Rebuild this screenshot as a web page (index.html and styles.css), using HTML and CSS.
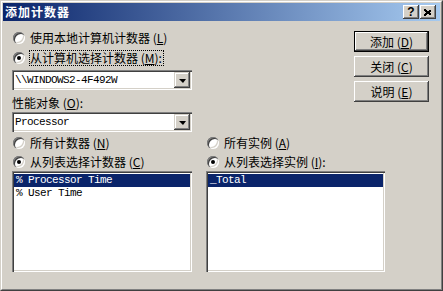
FILE: index.html
```html
<!DOCTYPE html>
<html lang="zh-CN">
<head>
  <meta charset="UTF-8" />
  <title>添加计数器</title>
  <link rel="stylesheet" href="styles.css">
</head>
<body>
  <div class="window">
    <div class="frame">
      <div class="titlebar">
        <span class="title">添加计数器</span>
        <div class="caption-buttons">
          <span class="caption-btn help">?</span>
          <span class="caption-btn close">
            <svg width="8" height="7" viewBox="0 0 8 7"><path d="M0.5 0.5 L7.5 6.5 M1.5 0.5 L7.5 5.5 M0.5 1.5 L6.5 6.5 M7.5 0.5 L0.5 6.5 M6.5 0.5 L0.5 5.5 M7.5 1.5 L1.5 6.5" stroke="#000" stroke-width="1" fill="none" shape-rendering="crispEdges"/></svg>
          </span>
        </div>
      </div>

      <div class="content">
        <div class="top">
          <div class="left">
            <div class="radio-row">
              <span class="radio"></span>
              <span class="radio-label">使用本地计算机计数器 (<u>L</u>)</span>
            </div>
            <div class="radio-row">
              <span class="radio checked"></span>
              <span class="radio-label focus">从计算机选择计数器 (<u>M</u>):</span>
            </div>
            <div class="combo">
              <span class="combo-text">\\WINDOWS2-4F492W</span>
              <span class="drop"></span>
            </div>
            <div class="field-label">性能对象 (<u>O</u>):</div>
            <div class="combo">
              <span class="combo-text">Processor</span>
              <span class="drop"></span>
            </div>
          </div>

          <div class="buttons">
            <button class="btn default">添加 (<u>D</u>)</button>
            <button class="btn">关闭 (<u>C</u>)</button>
            <button class="btn">说明 (<u>E</u>)</button>
          </div>
        </div>

        <div class="bottom">
          <div class="col">
            <div class="radio-row">
              <span class="radio"></span>
              <span class="radio-label">所有计数器 (<u>N</u>)</span>
            </div>
            <div class="radio-row short">
              <span class="radio checked"></span>
              <span class="radio-label">从列表选择计数器 (<u>C</u>)</span>
            </div>
            <div class="listbox">
              <div class="item selected">% Processor Time</div>
              <div class="item">% User Time</div>
            </div>
          </div>
          <div class="col">
            <div class="radio-row">
              <span class="radio"></span>
              <span class="radio-label">所有实例 (<u>A</u>)</span>
            </div>
            <div class="radio-row short">
              <span class="radio checked"></span>
              <span class="radio-label">从列表选择实例 (<u>I</u>):</span>
            </div>
            <div class="listbox">
              <div class="item selected">_Total</div>
            </div>
          </div>
        </div>
      </div>
    </div>
  </div>
</body>
</html>
```

FILE: styles.css
```css
body {
  margin: 0;
  background-color: #d4d0c8;
  font-family: "Noto Sans CJK SC", "Liberation Sans", sans-serif;
  font-size: 12px;
  color: #000;
}
u {
  text-decoration: underline;
}
.window {
  width: 443px;
  height: 291px;
  box-sizing: border-box;
  border: 1px solid;
  border-color: #d4d0c8 #404040 #404040 #d4d0c8;
  overflow: hidden;
}
.frame {
  height: 100%;
  box-sizing: border-box;
  border: 1px solid;
  border-color: #fff #808080 #808080 #fff;
  padding: 1px;
}
.titlebar {
  height: 18px;
  display: flex;
  align-items: center;
  justify-content: space-between;
  background: linear-gradient(to right, #0a246a, #a6caf0);
  padding: 0 2px 0 2px;
}
.title {
  color: #fff;
  font-weight: bold;
  font-size: 12px;
  letter-spacing: 1px;
  line-height: 18px;
}
.caption-buttons {
  display: flex;
  gap: 0;
  margin-right: 2px;
}
.caption-btn {
  width: 16px;
  height: 14px;
  box-sizing: border-box;
  display: flex;
  align-items: center;
  justify-content: center;
  background-color: #d4d0c8;
  box-shadow: inset -1px -1px #404040, inset 1px 1px #fff, inset -2px -2px #808080, inset 2px 2px #d4d0c8;
}
.caption-btn.help {
  font-family: "Liberation Sans", sans-serif;
  font-weight: bold;
  font-size: 12px;
  line-height: 14px;
}
.caption-btn.close {
  margin-left: 1px;
}
.content {
  padding: 7px 11px 0 9px;
}
.top {
  display: flex;
  justify-content: space-between;
}
.left {
  width: 180px;
}
.radio-row {
  height: 20px;
  display: flex;
  align-items: center;
  gap: 5px;
  padding-left: 1px;
}
.radio-row.short {
  height: 18px;
}
.radio {
  width: 12px;
  height: 12px;
  flex: none;
  border-radius: 50%;
  background-color: #fff;
  box-shadow: inset 1px 1px #808080, inset 2px 2px #404040, inset -1px -1px #fff, inset -2px -2px #d4d0c8;
  display: flex;
  align-items: center;
  justify-content: center;
}
.radio.checked::after {
  content: "";
  width: 4px;
  height: 4px;
  border-radius: 50%;
  background-color: #000;
}
.radio-label {
  white-space: nowrap;
  line-height: 14px;
}
.radio-label.focus {
  border: 1px dotted #000;
  margin-left: -1px;
  padding: 0 1px 0 0;
}
.combo {
  height: 20px;
  box-sizing: border-box;
  margin-top: 2px;
  display: flex;
  align-items: center;
  justify-content: space-between;
  background-color: #fff;
  box-shadow: inset 1px 1px #808080, inset 2px 2px #404040, inset -1px -1px #fff, inset -2px -2px #d4d0c8;
  padding: 2px;
}
.field-label + .combo {
  margin-top: 0;
}
.combo-text,
.item {
  font-family: "Liberation Mono", "DejaVu Sans Mono", monospace;
  font-size: 11px;
  letter-spacing: -0.6px;
  white-space: nowrap;
}
.combo-text {
  padding-left: 1px;
}
.drop {
  width: 16px;
  height: 16px;
  box-sizing: border-box;
  background-color: #d4d0c8;
  box-shadow: inset -1px -1px #404040, inset 1px 1px #d4d0c8, inset -2px -2px #808080, inset 2px 2px #fff;
  display: flex;
  align-items: center;
  justify-content: center;
}
.drop::after {
  content: "";
  width: 0;
  height: 0;
  border-left: 4px solid transparent;
  border-right: 3px solid transparent;
  border-top: 4px solid #000;
  margin-top: 1px;
}
.field-label {
  height: 19px;
  line-height: 19px;
  margin-top: 3px;
  white-space: nowrap;
}
.buttons {
  width: 75px;
  margin-top: 3px;
  display: flex;
  flex-direction: column;
  gap: 4px;
}
.btn {
  height: 21px;
  margin: 0;
  padding: 0;
  border: none;
  background-color: #d4d0c8;
  font-family: inherit;
  font-size: 12px;
  color: #000;
  box-shadow: inset -1px -1px #404040, inset 1px 1px #fff, inset -2px -2px #808080, inset 2px 2px #d4d0c8;
}
.btn.default {
  border: 1px solid #000;
  box-shadow: inset -1px -1px #404040, inset 1px 1px #fff, inset -2px -2px #808080;
}
.bottom {
  display: grid;
  grid-template-columns: 180px 179px;
  column-gap: 14px;
  margin-top: 1px;
}
.listbox {
  height: 101px;
  box-sizing: border-box;
  background-color: #fff;
  box-shadow: inset 1px 1px #808080, inset 2px 2px #404040, inset -1px -1px #fff, inset -2px -2px #d4d0c8;
  padding: 3px 2px 2px 2px;
}
.item {
  height: 13px;
  line-height: 13px;
  padding-left: 2px;
}
.item.selected {
  background-color: #0a246a;
  color: #fff;
}
```
